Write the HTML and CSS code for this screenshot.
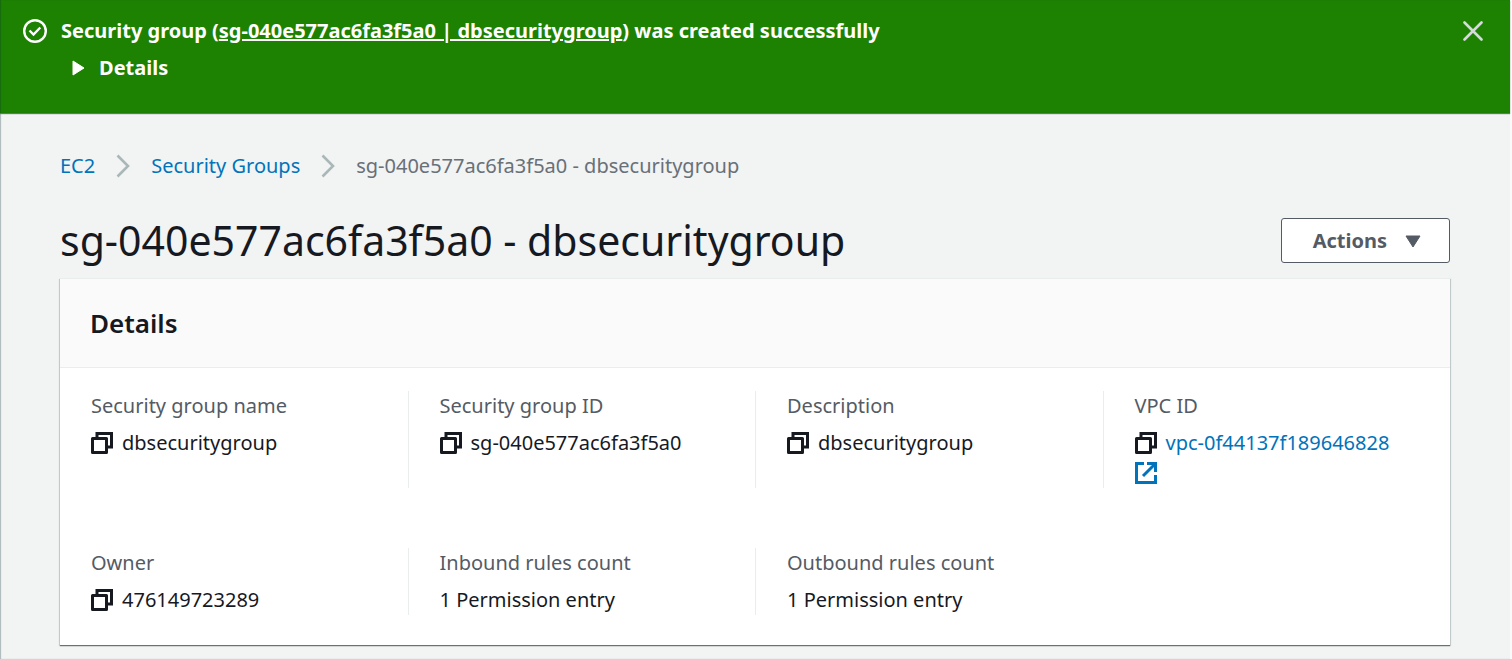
FILE: index.html
```html
<!DOCTYPE html>
<html lang="en">
<head>
<meta charset="utf-8">
<meta name="viewport" content="width=device-width, initial-scale=1">
<title>Security group details</title>
<link rel="stylesheet" href="styles.css">
</head>
<body>
<svg class="sprite" aria-hidden="true">
  <symbol id="copy" viewBox="0 0 22 22">
    <path d="M6 5V1.500H20.500V15H17" fill="none" stroke="currentColor" stroke-width="3"/>
    <path d="M1.500 6.500H15.500V20.500H1.500Z" fill="none" stroke="currentColor" stroke-width="3" stroke-linejoin="round"/>
  </symbol>
</svg>
<div class="app">
  <section class="flash" role="status">
    <svg class="flash-icon" viewBox="0 0 24 24" aria-hidden="true"><circle cx="12" cy="12" r="10.800"/><path d="M6.500 11.500L10.500 15.500L17.300 8.500"/></svg>
    <div class="flash-content">
      <p class="flash-message">Security group (<a href="#">sg-040e577ac6fa3f5a0 | dbsecuritygroup</a>) was created successfully</p>
      <button class="expander" type="button" aria-expanded="false"><svg class="expander-icon" viewBox="0 0 13 16" aria-hidden="true"><path d="M1 1L12 8L1 15Z"/></svg>Details</button>
    </div>
    <button class="close" type="button" aria-label="Dismiss"><svg viewBox="0 0 20 20" aria-hidden="true"><path d="M1.500 1.500L18.500 18.500M18.500 1.500L1.500 18.500"/></svg></button>
  </section>
  <main class="page">
    <nav class="breadcrumbs" aria-label="Breadcrumbs">
      <a href="#">EC2</a>
      <svg viewBox="0 0 14 24" aria-hidden="true"><path d="M1.500 1.500L12 12L1.500 22.500"/></svg>
      <a href="#">Security Groups</a>
      <svg viewBox="0 0 14 24" aria-hidden="true"><path d="M1.500 1.500L12 12L1.500 22.500"/></svg>
      <span>sg-040e577ac6fa3f5a0 - dbsecuritygroup</span>
    </nav>
    <header class="title-row">
      <h1>sg-040e577ac6fa3f5a0 - dbsecuritygroup</h1>
      <button class="actions" type="button">Actions<svg viewBox="0 0 16 13" aria-hidden="true"><path d="M1 1H15L8 12Z"/></svg></button>
    </header>
    <section class="card">
      <h2>Details</h2>
      <dl class="fields">
        <div class="field">
          <dt>Security group name</dt>
          <dd><button class="copy" type="button" aria-label="Copy security group name"><svg><use href="#copy"/></svg></button><span>dbsecuritygroup</span></dd>
        </div>
        <div class="field">
          <dt>Security group ID</dt>
          <dd><button class="copy" type="button" aria-label="Copy security group ID"><svg><use href="#copy"/></svg></button><span>sg-040e577ac6fa3f5a0</span></dd>
        </div>
        <div class="field">
          <dt>Description</dt>
          <dd><button class="copy" type="button" aria-label="Copy description"><svg><use href="#copy"/></svg></button><span>dbsecuritygroup</span></dd>
        </div>
        <div class="field">
          <dt>VPC ID</dt>
          <dd><button class="copy" type="button" aria-label="Copy VPC ID"><svg><use href="#copy"/></svg></button><a href="#">vpc-0f44137f189646828</a></dd>
          <dd><a class="external" href="#" aria-label="Open VPC in a new tab"><svg viewBox="0 0 22 22" aria-hidden="true"><path d="M9 1.500H1.500V20.500H20.500V13M12 1.500H20.500V10M20 2L8 14"/></svg></a></dd>
        </div>
        <div class="field">
          <dt>Owner</dt>
          <dd><button class="copy" type="button" aria-label="Copy owner"><svg><use href="#copy"/></svg></button><span>476149723289</span></dd>
        </div>
        <div class="field">
          <dt>Inbound rules count</dt>
          <dd>1 Permission entry</dd>
        </div>
        <div class="field">
          <dt>Outbound rules count</dt>
          <dd>1 Permission entry</dd>
        </div>
      </dl>
    </section>
  </main>
</div>
</body>
</html>
```
FILE: styles.css
```css
* { box-sizing: border-box; }
body {
  margin: 0;
  background: #fafafa;
  color: #16191f;
  font: 20px/30px "Noto Sans", "Open Sans", sans-serif;
}
h1, h2, p, dl, dd { margin: 0; }
a { color: #0073bb; text-decoration: none; }
button { font: inherit; cursor: pointer; }
svg { display: block; flex: none; }
.sprite { display: none; }
.app {
  min-height: 100vh;
  margin-right: 2px;
  background: #f2f3f3;
  box-shadow: inset 1px 0 1px #aab7b8;
}
.flash {
  display: flex;
  align-items: flex-start;
  padding: 16px 27px 30px 23px;
  background: #1d8102;
  color: #fff;
  box-shadow: inset 1px 0 1px #186b10, 0 1px 1px #687078;
  font-weight: 700;
}
.flash-icon {
  width: 24px;
  height: 24px;
  margin: 3px 14px 0 0;
  fill: none;
  stroke: #fff;
  stroke-width: 2.4;
}
.flash-content { flex: 1; }
.flash-message a { color: inherit; text-decoration: underline; text-decoration-thickness: 2px; }
.expander {
  display: flex;
  align-items: center;
  gap: 14px;
  margin-top: 7px;
  padding: 0 0 0 11px;
  border: 0;
  background: none;
  color: inherit;
  font-weight: 700;
}
.expander-icon { width: 13px; height: 16px; fill: #fff; stroke: #fff; stroke-linejoin: round; }
.close { margin-top: 5px; padding: 0; border: 0; background: none; }
.close svg { width: 20px; height: 20px; stroke: #d5dbdb; stroke-width: 2.6; stroke-linecap: round; }
.page { padding: 38px 60px 12px; }
.breadcrumbs { display: flex; align-items: center; gap: 21px; color: #687078; }
.breadcrumbs svg { width: 14px; height: 24px; fill: none; stroke: #aab7b8; stroke-width: 2.6; }
.title-row {
  display: flex;
  align-items: center;
  justify-content: space-between;
  margin: 30px 0 8px;
}
h1 { font-size: 41px; line-height: 59px; font-weight: 400; }
.actions {
  display: flex;
  align-items: center;
  gap: 18px;
  padding: 7px 28px 6px 31px;
  border: 1px solid #545b64;
  border-radius: 3px;
  background: #fff;
  color: #545b64;
  font-weight: 700;
}
.actions svg { width: 16px; height: 13px; fill: #545b64; stroke: #545b64; stroke-linejoin: round; }
.card {
  background: #fff;
  border-top: 1px solid #eaeded;
  box-shadow: 0 1px 1px #687078, 1px 1px 1px #d5dbdb, -1px 1px 1px #d5dbdb;
}
h2 {
  padding: 24px 30px;
  background: #fafafa;
  border-bottom: 1px solid #eaeded;
  font-size: 26px;
  line-height: 40px;
  font-weight: 600;
}
.fields {
  display: grid;
  grid-template-columns: repeat(4, 1fr);
  gap: 60px 0;
  padding: 23px 0 30px;
}
.field { padding: 0 30px 0 31px; border-left: 1px solid #eaeded; }
.field:nth-child(4n + 1) { border-left: 0; }
dt { margin-bottom: 7px; color: #545b64; }
dd { display: flex; align-items: center; gap: 9px; min-height: 30px; }
.copy { padding: 0; border: 0; background: none; color: #16191f; }
.copy svg, .external svg { width: 22px; height: 22px; }
.external svg { fill: none; stroke: #0073bb; stroke-width: 3; }
```
